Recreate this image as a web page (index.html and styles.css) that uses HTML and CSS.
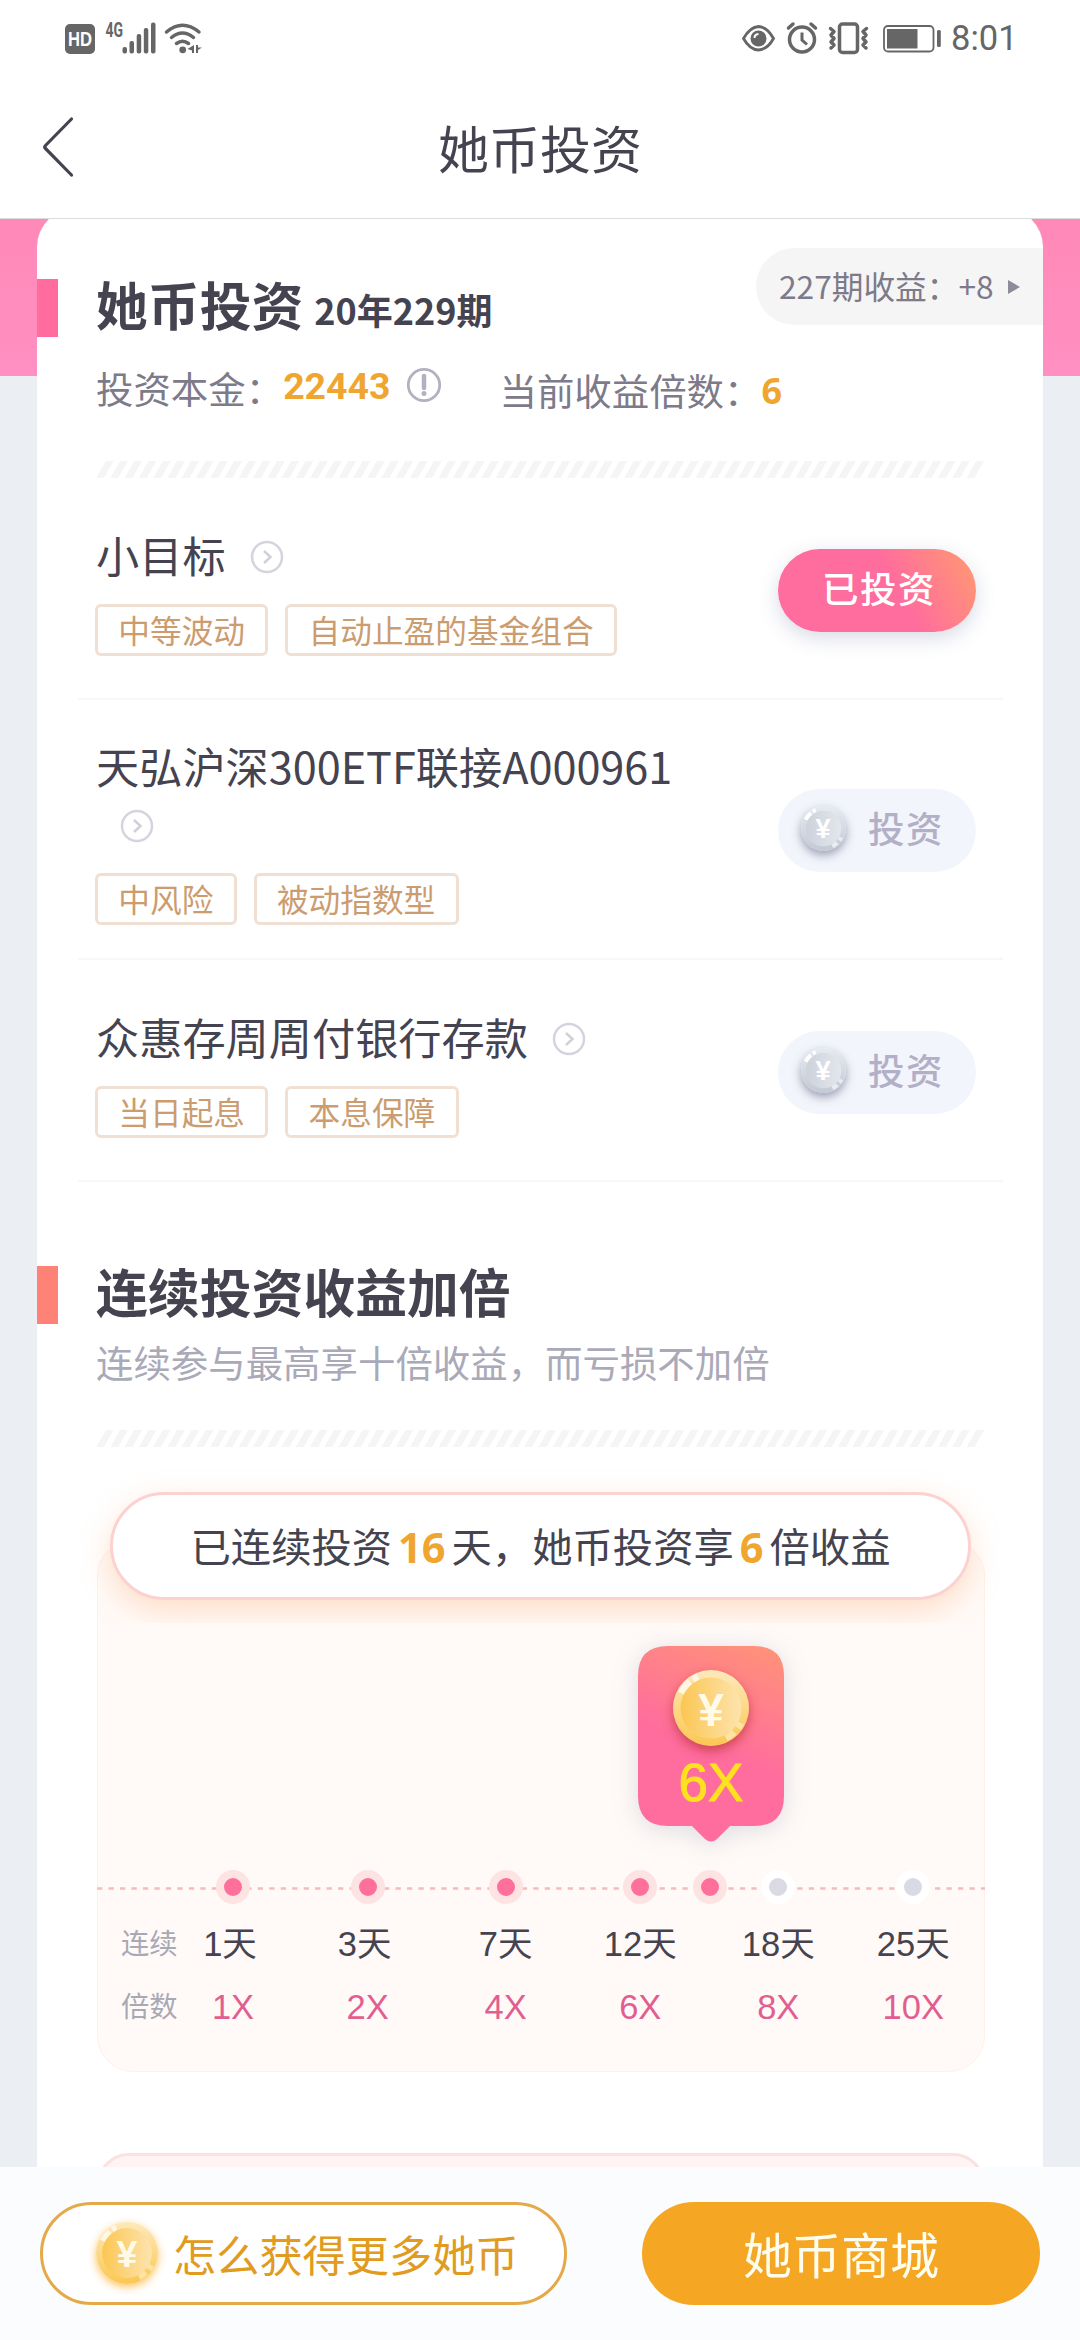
FILE: index.html
```html
<!DOCTYPE html>
<html lang="zh-CN">
<head>
<meta charset="utf-8">
<title>她币投资</title>
<link rel="stylesheet" href="styles.css">
</head>
<body>
<svg class="defs" width="0" height="0" aria-hidden="true">
  <defs>
    <linearGradient id="goldRim" x1="0" y1="0" x2="0" y2="1"><stop offset="0" stop-color="#fee9bb"/><stop offset="1" stop-color="#fbc752"/></linearGradient>
    <linearGradient id="goldFace" x1="0" y1="0" x2="1" y2="0"><stop offset="0" stop-color="#fbc752"/><stop offset="1" stop-color="#fde3ae"/></linearGradient>
    <linearGradient id="silverRim" x1="0" y1="0" x2="0" y2="1"><stop offset="0" stop-color="#e6eaf1"/><stop offset="1" stop-color="#c3c9d4"/></linearGradient>
    <linearGradient id="silverFace" x1="0" y1="0" x2="1" y2="0"><stop offset="0" stop-color="#cdd2db"/><stop offset="1" stop-color="#e3e6ec"/></linearGradient>
  </defs>
  <symbol id="coin-gold" viewBox="0 0 76 76">
    <circle cx="38" cy="38" r="38" fill="url(#goldRim)"/>
    <path d="M8 23A33.500 33.500 0 0 1 17 12M20 9.500A33.500 33.500 0 0 1 25 7" fill="none" stroke="#fff7e6" stroke-width="7"/>
    <path d="M68 53A33.500 33.500 0 0 1 65 58M61 62A33.500 33.500 0 0 1 53 68" fill="none" stroke="#fde3a4" stroke-width="7"/>
    <circle cx="38" cy="38" r="30.500" fill="url(#goldFace)"/>
  </symbol>
  <symbol id="coin-silver" viewBox="0 0 76 76">
    <circle cx="38" cy="38" r="38" fill="url(#silverRim)"/>
    <path d="M8 23A33.500 33.500 0 0 1 17 12M20 9.500A33.500 33.500 0 0 1 25 7" fill="none" stroke="#fff" stroke-width="7"/>
    <path d="M68 53A33.500 33.500 0 0 1 65 58M61 62A33.500 33.500 0 0 1 53 68" fill="none" stroke="#e9edf3" stroke-width="7"/>
    <circle cx="38" cy="38" r="30" fill="url(#silverFace)"/>
  </symbol>
  <symbol id="go" viewBox="0 0 34 34">
    <circle cx="17" cy="17" r="15" fill="none" stroke="#d4d4de" stroke-width="2.500"/>
    <path d="M14 11L20.500 17L14 23" fill="none" stroke="#d0d0da" stroke-width="2.500"/>
  </symbol>
</svg>

<header class="header">
  <div class="status">
    <svg class="status-left" width="140" height="34" viewBox="64 20 140 34" fill="#666">
      <rect x="65" y="23" width="30" height="30" rx="5"/>
      <text x="80" y="45" class="hd" textLength="24" lengthAdjust="spacingAndGlyphs">HD</text>
      <text x="105.500" y="36" class="net" textLength="17.500" lengthAdjust="spacingAndGlyphs">4G</text>
      <rect x="122.500" y="46" width="4.500" height="6.500" rx="2"/><rect x="129.500" y="40" width="4.500" height="12.500" rx="2"/><rect x="136.700" y="33" width="4.500" height="19.500" rx="2"/><rect x="143.800" y="27" width="4.500" height="25.500" rx="2"/><rect x="151" y="21.500" width="4.500" height="31" rx="2"/>
      <g fill="none" stroke="#666" stroke-width="3.500" stroke-linecap="round">
        <path d="M166.500 31Q182.500 17.500 199 31M171.500 36.500Q182.500 27.500 193.500 36.500M176.500 42.500Q182.500 38 188.500 42.500"/>
      </g>
      <circle cx="182.700" cy="48.800" r="3.400"/>
      <path d="M194 44v8h-2v-2.500l-4.500-1.500zM196 44h2v2.500h4l-4 2.500v3h-2z"/>
    </svg>
    <svg class="status-right" width="206" height="36" viewBox="740 19 206 36" fill="none" stroke="#666">
      <path d="M743.500 37.500Q750 26 758.500 25.500Q767.500 26 773.500 37.500Q767.500 48.500 758.500 49Q749.500 48.500 743.500 37.500z" stroke-width="2.800"/>
      <circle cx="758.500" cy="37.500" r="8" fill="#666" stroke="none"/><path d="M754.500 37q0-3.500 4-4" stroke="#fff" stroke-width="2"/>
      <circle cx="802" cy="38.500" r="12.500" stroke-width="3.500"/><path d="M802 31.500v7.500l5 4.500" stroke-width="3"/>
      <path d="M788.500 27l4.500-4M815.500 27l-4.500-4" stroke-width="3.500" stroke-linecap="round"/>
      <rect x="839.500" y="23" width="18" height="28.500" rx="3" stroke-width="3.500"/>
      <path d="M830.500 27.500l3.500 3-3 3.500 3 3.500-3 3.500 3 3-3 3M866.500 27.500l-3.500 3 3 3.500-3 3.500 3 3.500-3 3 3 3" stroke-width="3.500" stroke-linecap="round" stroke-linejoin="round"/>
      <rect x="884" y="25" width="49.500" height="25.500" rx="4" stroke-width="1.800"/>
      <rect x="887" y="28" width="30.500" height="19.500" fill="#666" stroke="none"/><rect x="937" y="29" width="3.800" height="17" rx="1.500" fill="#666" stroke="none"/>
    </svg>
    <span class="clock">8:01</span>
  </div>
  <nav class="nav">
    <svg class="back" width="34" height="62" viewBox="0 0 34 62"><path d="M30.500 3L4.500 29.500Q3 31 4.500 32.500L30.500 59" fill="none" stroke="#44434f" stroke-width="3.200" stroke-linecap="round"/></svg>
    <h1>她币投资</h1>
  </nav>
</header>

<main class="page">
  <section class="card">
    <a class="last-term"><span>227期收益：+8</span><i></i></a>

    <h2 class="heading heading-pink">她币投资<small>20年229期</small></h2>
    <div class="stats">
      <span class="label">投资本金：</span><b class="principal">22443</b>
      <svg class="info" width="36" height="36" viewBox="0 0 36 36"><circle cx="18" cy="18" r="15.700" fill="none" stroke="#b3b1c0" stroke-width="2.800"/><path d="M18 9v12" stroke="#b3b1c0" stroke-width="4.500" stroke-linecap="round"/><circle cx="18" cy="26.500" r="2.500" fill="#b3b1c0"/></svg>
      <span class="rate">当前收益倍数：</span><b class="times">6</b>
    </div>
    <div class="stripes"></div>

    <ul class="products">
      <li class="product">
        <div class="product-info">
          <h3>小目标<svg class="go"><use href="#go"/></svg></h3>
          <div class="tags"><span>中等波动</span><span>自动止盈的基金组合</span></div>
        </div>
        <button class="btn btn-done">已投资</button>
      </li>
      <li class="product product-tall">
        <div class="product-info">
          <h3>天弘沪深300ETF联接A000961 <svg class="go"><use href="#go"/></svg></h3>
          <div class="tags"><span>中风险</span><span>被动指数型</span></div>
        </div>
        <button class="btn"><svg class="coin coin-s" viewBox="0 0 76 76"><use href="#coin-silver"/><text x="38" y="54" class="yen yen-silver">¥</text></svg>投资</button>
      </li>
      <li class="product">
        <div class="product-info">
          <h3>众惠存周周付银行存款<svg class="go"><use href="#go"/></svg></h3>
          <div class="tags"><span>当日起息</span><span>本息保障</span></div>
        </div>
        <button class="btn"><svg class="coin coin-s" viewBox="0 0 76 76"><use href="#coin-silver"/><text x="38" y="54" class="yen yen-silver">¥</text></svg>投资</button>
      </li>
    </ul>

    <h2 class="heading heading-coral">连续投资收益加倍</h2>
    <p class="subtitle">连续参与最高享十倍收益，而亏损不加倍</p>
    <div class="stripes stripes-second"></div>

    <div class="streak">已连续投资<b>16</b>天，她币投资享<b>6</b>倍收益</div>
    <div class="panel">
      <div class="callout">
        <svg class="callout-shape" width="146" height="196" viewBox="0 0 146 196">
          <defs><linearGradient id="callout" gradientUnits="userSpaceOnUse" x1="130" y1="0" x2="85" y2="112"><stop offset="0" stop-color="#ff9279"/><stop offset="1" stop-color="#ff6c9e"/></linearGradient></defs>
          <path d="M30 0H116Q146 0 146 30V150Q146 180 116 180H92L79 193Q73 198 67 193L54 180H30Q0 180 0 150V30Q0 0 30 0z" fill="url(#callout)"/>
        </svg>
        <svg class="coin coin-l" viewBox="0 0 76 76"><use href="#coin-gold"/><text x="38" y="56" class="yen">¥</text></svg>
        <strong>6X</strong>
      </div>
      <div class="axis">
        <svg class="dash" width="888" height="3"><path d="M0 1.500H888" stroke="#f5bcbc" stroke-width="2.400" stroke-dasharray="5.300 6.180"/></svg>
        <span></span><i class="on"></i><i class="on"></i><i class="on"></i><i class="on"></i><i></i><i></i>
        <i class="on now"></i>
      </div>
      <div class="scale days"><em>连续</em><span class="lead">1天</span><span class="lead">3天</span><span>7天</span><span>12天</span><span>18天</span><span>25天</span></div>
      <div class="scale rates"><em>倍数</em><span>1X</span><span>2X</span><span>4X</span><span>6X</span><span>8X</span><span>10X</span></div>
    </div>
    <div class="promo"></div>
  </section>
</main>

<footer class="bar">
  <a class="cta cta-more"><svg class="coin coin-m" viewBox="0 0 76 76"><use href="#coin-gold"/><text x="38" y="55" class="yen">¥</text></svg>怎么获得更多她币</a>
  <a class="cta cta-mall">她币商城</a>
</footer>
</body>
</html>
```
FILE: styles.css
```css
* { box-sizing: border-box; margin: 0; padding: 0; }
body {
  width: 1080px;
  height: 2340px;
  overflow: hidden;
  display: flex;
  flex-direction: column;
  background: #ebeff4;
  color: #44434f;
  font-family: "Noto Sans CJK SC", "Noto Sans", sans-serif;
}
.defs { position: absolute; }
.yen { font: bold 46px "Liberation Sans", sans-serif; text-anchor: middle; fill: #fffbe8; }
.yen-silver { fill: #fff; }

/* header */
.header { height: 219px; background: #fff; border-bottom: 1px solid #dcdcdc; flex: none; }
.status { height: 75px; display: flex; align-items: center; padding: 0 66px 0 64px; }
.status-left { margin-right: auto; overflow: visible; }
.hd { font: bold 20px "Liberation Sans", sans-serif; fill: #fff; text-anchor: middle; }
.net { font: bold 20px Roboto, sans-serif; }
.clock { font: 34.500px/38px Roboto, sans-serif; color: #666; margin-left: 4px; width: 63px; white-space: nowrap; }
.status-right { margin-right: 1px; }
.nav { height: 143px; display: grid; grid-template-columns: 200px 1fr 200px; align-items: center; }
.back { margin-left: 41px; }
.nav h1 { text-align: center; font-weight: 400; font-size: 51px; line-height: 72px; }

/* scrolling page */
.page {
  height: 1948px;
  flex: none;
  overflow: hidden;
  background: linear-gradient(#ff89b7, #ff90c2) 0 0 / 100% 157px no-repeat;
}
.card {
  position: relative;
  margin: -11px 37px 0;
  padding-top: 60px;
  height: 2000px;
  border-radius: 39px;
  background: #fff;
}
.last-term {
  position: absolute;
  right: 0;
  top: 40px;
  width: 287px;
  height: 77px;
  padding: 0 23px 3px 23px;
  display: flex;
  align-items: center;
  justify-content: space-between;
  border-radius: 39px 0 0 39px;
  background: #f5f5f5;
  color: #7d7a89;
  font-size: 31.680px;
  white-space: nowrap;
}
.last-term i { border-left: 12px solid #8e8c9a; border-top: 7.500px solid transparent; border-bottom: 7.500px solid transparent; margin-top: 3px; }
.heading { height: 72px; display: flex; align-items: center; font-size: 51.840px; line-height: 74px; font-weight: 700; }
.heading::before { content: ""; width: 21px; height: 58px; margin: 8px 38px 0 0; }
.heading-pink::before { background: #ff6c9d; }
.heading-coral::before { background: #ff8276; }
.heading small { font-size: 36px; margin: 10px 0 0 11px; }
.heading-coral { margin-top: 73px; }
.stats { height: 56px; margin: 19px 0 0 59px; display: flex; align-items: center; font-size: 37.440px; line-height: 56px; color: #7d7a89; white-space: nowrap; }
.stats b { color: #efa630; }
.label { margin-top: 2px; }
.principal { font-family: Roboto, sans-serif; margin-top: -3px; }
.info { margin: -4px 0 0 16px; }
.rate { margin: 6px 0 0 57px; }
.times { font-family: "Noto Sans", sans-serif; font-size: 36px; margin-top: 8px; }
.stripes {
  height: 17px;
  margin: 46px 58px 0 59px;
  background: repeating-linear-gradient(119.500deg, #f5f5f5 0 2.500px, transparent 3.300px 8px, #f5f5f5 8.800px 12.420px);
  clip-path: polygon(9.600px 0, 100% 0, calc(100% - 9.600px) 100%, 0 100%);
}
.subtitle { margin: 7px 0 0 59px; font-size: 37.440px; line-height: 56px; color: #aaa9b8; }
.stripes-second { margin-top: 40px; }

/* products */
.products { list-style: none; padding: 0 40px 0 41px; }
.product { height: 222px; padding: 4px 27px 0 18px; border-bottom: 2px solid #f7f7f7; display: flex; align-items: center; justify-content: space-between; }
.product-tall { height: 260px; padding-top: 2px; }
.product-info { width: 620px; }
.product h3 { font-size: 43.200px; line-height: 59px; font-weight: 400; }
.product-tall h3 { line-height: 58.500px; }
.go { width: 34px; height: 34px; margin-left: 24px; vertical-align: -1px; display: inline-block; }
.tags { display: flex; gap: 17px; margin: 20px 0 0 -1px; }
.tags span { height: 52px; padding: 0 20.300px; border: 3px solid #f0e0d3; border-radius: 6px; font-size: 31.680px; line-height: 44px; color: #cb9c70; white-space: nowrap; }
.btn {
  width: 198px;
  height: 83px;
  border: 0;
  border-radius: 42px;
  background: #f2f5fb;
  color: #b2b0c7;
  font: 500 36.500px/80px "Noto Sans CJK SC", sans-serif;
  letter-spacing: 1.500px;
  display: flex;
  align-items: center;
  padding: 0 0 4px 23px;
  flex: none;
}
.btn-done { background: linear-gradient(62deg, #ff6c9e 58%, #ff9279 92%); color: #fff; padding-left: 44px; box-shadow: 0 6px 20px rgba(90, 105, 150, .24); }
.coin { border-radius: 50%; overflow: visible; flex: none; }
.coin-s { width: 45px; height: 45px; margin: 1px 22px 0 0; box-shadow: 0 4px 10px rgba(120, 118, 145, .7); }
.coin-l { width: 76px; height: 76px; box-shadow: 0 5px 11px rgba(190, 55, 60, .75); }
.coin-m { width: 62px; height: 62px; margin-right: 15px; box-shadow: 0 3px 9px rgba(253, 190, 80, .9); }

/* streak chart */
.streak {
  position: relative;
  z-index: 1;
  height: 108px;
  margin: 45px 72px 0 73px;
  padding-bottom: 4px;
  border: 3px solid #fcd2d1;
  border-radius: 54px;
  background: #fff;
  display: flex;
  justify-content: center;
  font-size: 40.320px;
  line-height: 99px;
  white-space: nowrap;
  box-shadow: 0 10px 30px rgba(255, 168, 115, .36);
  clip-path: inset(-25px -30px -23px -30px);
}
.streak b { font: bold 41.500px/104px "Noto Sans", sans-serif; color: #efa630; margin: 0 6px; }
.panel { position: relative; height: 532px; margin: -60px 58px 0 60px; padding-top: 328px; border: 1px solid #fff1e8; border-radius: 36px; background: #fffaf7; }
.callout { position: absolute; left: 540px; top: 105px; width: 146px; height: 196px; padding-top: 24px; display: flex; flex-direction: column; align-items: center; }
.callout-shape { position: absolute; left: 0; top: 0; overflow: visible; filter: drop-shadow(0 4px 12px rgba(90, 105, 150, .2)); }
.callout .coin { position: relative; }
.callout strong { position: relative; margin-top: 7px; font: 53px/60px "Liberation Sans", sans-serif; color: #ffe11f; -webkit-text-stroke: 1px #ffe11f; }
.axis, .scale { display: grid; grid-template-columns: 67px 136px 133.400px 142.600px 126.600px 149.400px 120.600px; align-items: center; }
.axis { position: relative; height: 36px; justify-items: center; }
.axis i { position: relative; width: 34px; height: 34px; border: 8.500px solid #fff; border-radius: 50%; background: #dadae4; }
.axis i.on { border-color: #fee3e3; background: #ff6f9b; }
.axis i.now { position: absolute; left: 595px; top: 1px; }
.dash { position: absolute; left: -1px; top: 18px; }
.scale { text-align: center; height: 62px; line-height: 58px; font-family: "Liberation Sans", "Noto Sans CJK SC", sans-serif; font-size: 34.500px; white-space: nowrap; }
.scale em { font-style: normal; font-size: 28.300px; color: #a9a9b6; text-align: left; padding-left: 23px; position: relative; }
.days { margin-top: 8px; }
.days .lead { padding-right: 6px; }
.rates { color: #e35e90; margin-top: 1px; }
.promo { height: 120px; margin: 81px 58px 0 60px; border: 3px solid #fae2e0; border-radius: 32px; background: #fff4f3; }

/* bottom bar */
.bar { flex: 1; padding: 35px 40px 0; display: flex; justify-content: space-between; background: #fbfcfe; }
.cta { height: 103px; border-radius: 52px; display: flex; align-items: center; white-space: nowrap; padding-bottom: 4px; }
.cta-more { width: 527px; padding-left: 53px; border: 3px solid #e4aa4a; background: #fff; color: #e09b20; font-size: 43.200px; padding-bottom: 2px; }
.cta-mall { width: 398px; justify-content: center; background: #f5a623; color: #fffdee; font-size: 48.960px; padding-bottom: 2px; }
```
